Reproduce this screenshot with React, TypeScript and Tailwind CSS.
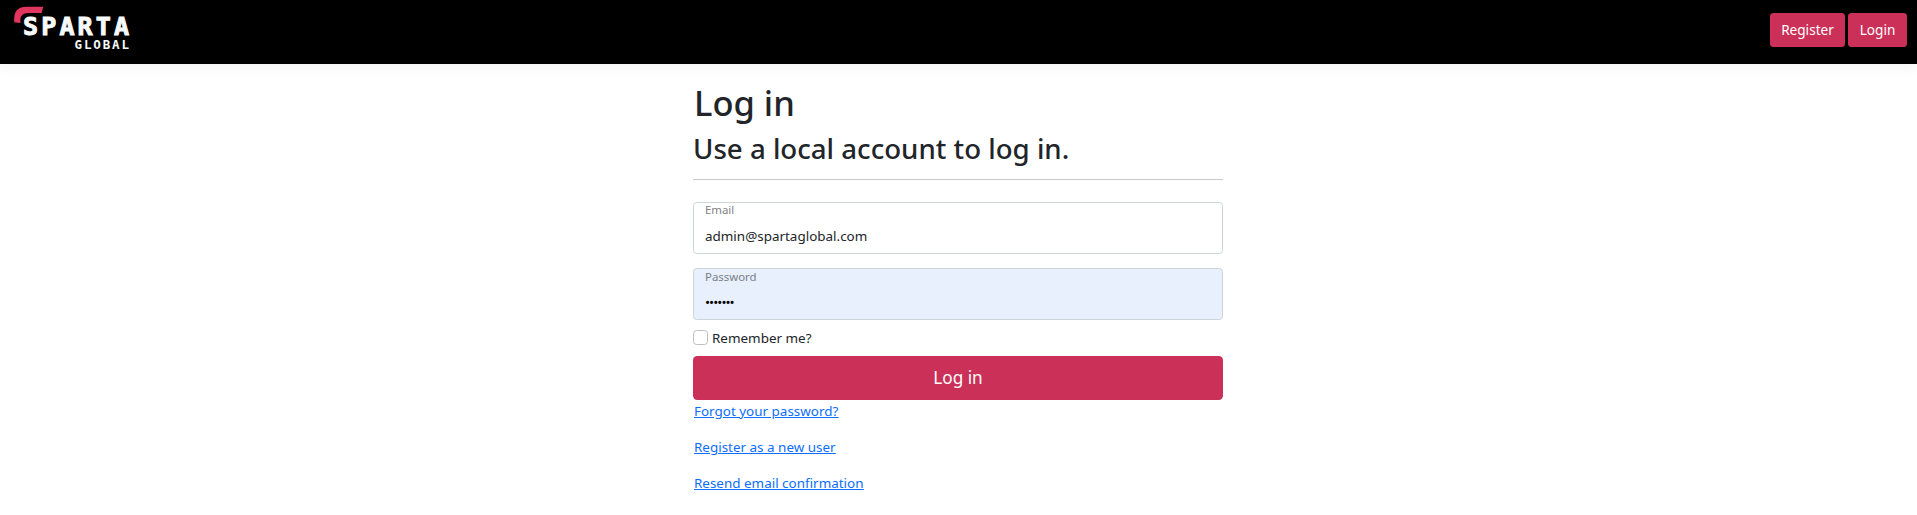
function Logo() {
  return (
    <svg width="125" height="60" viewBox="0 0 125 60" className="overflow-visible" aria-label="Sparta Global">
      <path d="M0.2 22.3 V19 Q0.2 6.8 12.6 6.8 H29.2 L27.6 13 H14 Q6.8 13 6.4 19.6 V23 Z" fill="#e2365f" />
      <g fill="#f7fafa" fontFamily="'DejaVu Sans Mono', monospace" fontWeight="700">
        <text x="9" y="35.3" fontSize="25" textLength="106" stroke="#f7fafa" strokeWidth="1">SPARTA</text>
        <text x="60.5" y="48.7" fontSize="12.5" textLength="54.5">GLOBAL</text>
      </g>
    </svg>
  );
}

function Header() {
  return (
    <header className="flex h-16 items-start justify-between bg-black pr-2.5 pl-3.5 shadow-[0_4px_12px_rgba(0,0,0,0.05)]">
      <Logo />
      <nav className="flex gap-[3px] pt-[13px] text-[13.6px] text-white">
        <a href="#" className="flex h-[34px] w-[75px] items-center justify-center rounded-[3.5px] bg-[#cb3058] pb-0.5">Register</a>
        <a href="#" className="flex h-[34px] w-[59px] items-center justify-center rounded-[3.5px] bg-[#cb3058] pb-0.5">Login</a>
      </nav>
    </header>
  );
}

export default function App() {
  return (
    <div className="min-h-screen bg-white font-['Noto_Sans',sans-serif] text-[13.45px] leading-[21px] text-[#212529]">
      <Header />
      <main className="ml-[693px] w-[530px] pt-[18px]">
        <h1 className="pl-px text-[34.5px] leading-[42px] font-medium">Log in</h1>
        <h2 className="mt-[7px] text-[27.65px] leading-[34px] font-medium">Use a local account to log in.</h2>
        <hr className="mt-3.5 border-0 border-t border-[#c8c9ca]" />
        <form className="flex flex-col">
          <label className="mt-[22px] flex h-[52px] flex-col rounded-[3.5px] border border-[#ced4da] px-[11px]">
            <span className="text-[11.4px] leading-[14px] text-[#7f8285]">Email</span>
            <input className="mt-[9px] h-[21px] w-full outline-none" type="text" defaultValue="admin@spartaglobal.com" />
          </label>
          <label className="mt-3.5 flex h-[52px] flex-col rounded-[3.5px] border border-[#ced4da] bg-[#e8effd] px-[11px]">
            <span className="pt-px text-[11.4px] leading-[14px] text-[#7b8088]">Password</span>
            <input className="mt-[8px] h-[21px] w-full tracking-[-0.95px] text-black outline-none" type="password" defaultValue="sparta1" />
          </label>
          <label className="mt-[7px] flex h-[21px] items-center gap-1">
            <input type="checkbox" className="size-[15px] appearance-none rounded-[3.5px] border border-[#bfbfbf]" />
            <span className="pt-0.5">Remember me?</span>
          </label>
          <button type="button" className="mt-2 h-11 rounded-[4.2px] bg-[#cb3058] pb-0.5 text-[17.2px] text-white">Log in</button>
        </form>
        <div className="flex flex-col items-start gap-[15px] pt-px pl-px text-[#0d6efd] underline">
          <a href="#">Forgot your password?</a>
          <a href="#">Register as a new user</a>
          <a href="#">Resend email confirmation</a>
        </div>
      </main>
    </div>
  );
}
